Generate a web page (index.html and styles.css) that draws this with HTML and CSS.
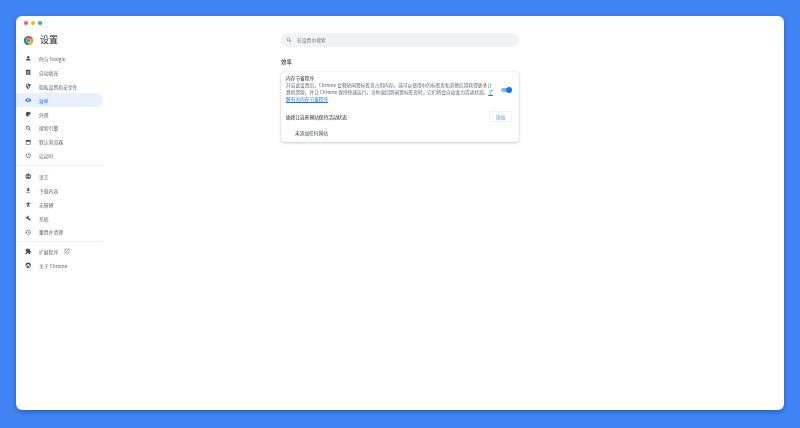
FILE: index.html
```html
<!DOCTYPE html>
<html lang="zh-CN">
<head>
<meta charset="utf-8">
<title>设置</title>
<link rel="stylesheet" href="styles.css">
</head>
<body>
<div class="window">
  <div class="titlebar">
    <span class="dot red"></span><span class="dot yellow"></span><span class="dot green"></span>
  </div>
  <div class="content">
    <aside class="sidebar">
      <div class="brand">
        <svg class="logo" viewBox="0 0 24 24"><circle cx="12" cy="12" r="12" fill="#db4437"/><path d="M12 12 1.6 18A12 12 0 0 1 1.6 6Z" fill="#0f9d58"/><path d="M12 12 12 24A12 12 0 0 1 1.6 18Z" fill="#0f9d58"/><path d="M12 12h10.9A12 12 0 0 1 12 24Z" fill="#f4b400"/><path d="M12 12 22.4 6A12 12 0 0 1 24 12Z" fill="#f4b400"/><circle cx="12" cy="12" r="6" fill="#fff"/><circle cx="12" cy="12" r="4.6" fill="#4285f4"/></svg>
        <span class="brand-name">设置</span>
      </div>
      <nav class="nav">
        <a class="item"><svg class="ico" viewBox="0 0 24 24"><circle cx="12" cy="8" r="4.5"/><path d="M3 20v-2c0-3 6-4.500 9-4.500s9 1.500 9 4.500v2Z"/></svg>你与 Google</a>
        <a class="item"><svg class="ico" viewBox="0 0 24 24"><path d="M4 3h16v18H4Zm4 4v2h8V7Zm0 4v2h8v-2Zm0 4v2h5v-2Z" fill-rule="evenodd"/></svg>自动填充</a>
        <a class="item"><svg class="ico" viewBox="0 0 24 24"><path d="M12 2 4 5v6c0 5 3.400 9.500 8 11 4.600-1.500 8-6 8-11V5Zm0 3v7H6.500V6.800ZM12 12h5.500c-.5 3.500-2.700 6.200-5.500 7.300Z" fill-rule="evenodd"/></svg>隐私设置和安全性</a>
        <a class="item active"><svg class="ico" viewBox="0 0 24 24"><path d="M12 5C7 5 3 8 1 12c2 4 6 7 11 7s9-3 11-7c-2-4-6-7-11-7Zm0 11.500a4.500 4.500 0 1 1 0-9 4.500 4.500 0 0 1 0 9Zm0-2.500a2 2 0 1 0 0-4 2 2 0 0 0 0 4Z" fill-rule="evenodd"/></svg>效率</a>
        <a class="item"><svg class="ico" viewBox="0 0 24 24"><path d="M12 3a9 9 0 0 0 0 18c1.500 0 2-1 2-2 0-1.500-1-1.800-1-3 0-1 1-2 2-2h2.500c2 0 3.500-1.500 3.500-3.500C21 6 17 3 12 3Z"/></svg>外观</a>
        <a class="item"><svg class="ico" viewBox="0 0 24 24"><path d="M10 3a7 7 0 1 0 4.300 12.500l5.200 5.200 1.700-1.700-5.200-5.200A7 7 0 0 0 10 3Zm0 2.200a4.800 4.800 0 1 1 0 9.600 4.800 4.800 0 0 1 0-9.600Z" fill-rule="evenodd"/></svg>搜索引擎</a>
        <a class="item"><svg class="ico" viewBox="0 0 24 24"><path d="M3 4h18v16H3Zm2 6v8h14v-8Z" fill-rule="evenodd"/></svg>默认浏览器</a>
        <a class="item"><svg class="ico" viewBox="0 0 24 24"><path d="M11 3h2v10h-2ZM7.500 5.800l1.400 1.500a6.500 6.500 0 1 0 6.200 0l1.400-1.500a8.500 8.500 0 1 1-9 0Z"/></svg>启动时</a>
        <div class="sep"></div>
        <a class="item"><svg class="ico" viewBox="0 0 24 24"><path d="M12 2a10 10 0 1 0 0 20 10 10 0 0 0 0-20ZM5 9h4v6H5Zm6 0h2v6h-2Zm4 0h4v6h-4ZM9.500 4.800 9 7H6ZM14.500 4.800 18 7h-3ZM6 17h3l.5 2.200ZM15 17h3l-3.500 2.200Z" fill-rule="evenodd"/></svg>语言</a>
        <a class="item"><svg class="ico" viewBox="0 0 24 24"><path d="M9 3h6v7h4l-7 7-7-7h4ZM5 19h14v2H5Z"/></svg>下载内容</a>
        <a class="item"><svg class="ico" viewBox="0 0 24 24"><path d="M12 2.500a2 2 0 1 1 0 4 2 2 0 0 1 0-4ZM3 7h18v2l-6 1v4l2 8h-2.500L12 15.500 9.500 22H7l2-8v-4L3 9Z"/></svg>无障碍</a>
        <a class="item"><svg class="ico" viewBox="0 0 24 24"><path d="M21 17.500 13.500 10c.7-2 .3-4.300-1.300-5.900C10.500 2.400 8 2.100 6 3l3.600 3.600-2.800 2.800L3.100 5.800C2.100 7.800 2.500 10.400 4.200 12.100c1.600 1.600 3.900 2 5.900 1.300L17.600 21c.4.400 1 .4 1.400 0l2-2c.4-.4.400-1.100 0-1.500Z"/></svg>系统</a>
        <a class="item"><svg class="ico" viewBox="0 0 24 24"><path d="M13 3a9 9 0 0 0-9 9H1l4 4 4-4H6a7 7 0 1 1 2 4.900l-1.400 1.400A9 9 0 1 0 13 3Zm-1 5v5l4.200 2.500.8-1.300-3.500-2V8Z"/></svg>重置并清理</a>
        <div class="sep sep-b"></div>
        <a class="item"><svg class="ico" viewBox="0 0 24 24"><path d="M20.500 11H19V7a2 2 0 0 0-2-2h-4V3.500a2.500 2.500 0 0 0-5 0V5H4a2 2 0 0 0-2 2v3.800h1.500a2.700 2.700 0 0 1 0 5.400H2V20a2 2 0 0 0 2 2h3.800v-1.500a2.700 2.700 0 0 1 5.400 0V22H17a2 2 0 0 0 2-2v-4h1.500a2.500 2.500 0 0 0 0-5Z"/></svg>扩展程序<svg class="ext" viewBox="0 0 24 24"><path d="M19 19H5V5h7V3H3v18h18v-9h-2ZM14 3v2h3.600l-9.800 9.800 1.400 1.400L19 6.400V10h2V3Z"/></svg></a>
        <a class="item"><svg class="ico" viewBox="0 0 24 24"><path d="M12 2a10 10 0 1 0 0 20 10 10 0 0 0 0-20Zm0 6.500a3.500 3.500 0 1 1 0 7 3.500 3.500 0 0 1 0-7ZM5 7h14l-3 1.500H9.500ZM4.200 10 8 15l-2 4.500A8.500 8.500 0 0 1 4.200 10ZM20 10a8.500 8.500 0 0 1-7 10l3-5Z" fill-rule="evenodd"/></svg>关于 Chrome</a>
      </nav>
    </aside>
    <main class="main">
      <div class="search">
        <svg class="search-ico" viewBox="0 0 24 24"><path d="M10 3a7 7 0 1 0 4.300 12.500l5.200 5.200 1.700-1.700-5.200-5.200A7 7 0 0 0 10 3Zm0 2.200a4.800 4.800 0 1 1 0 9.600 4.800 4.800 0 0 1 0-9.600Z" fill-rule="evenodd"/></svg>
        <span class="search-text">在设置中搜索</span>
      </div>
      <h2 class="section-title">效率</h2>
      <section class="card">
        <div class="saver">
          <div class="saver-text">
            <div class="saver-title">内存节省程序</div>
            <p class="saver-desc">开启此设置后，Chrome 会释放闲置标签页占用内存。这可以使用中的标签页和其他应用获得更多计算机资源，并让 Chrome 保持快速运行。当你返回到闲置标签页时，它们将会自动变为活动状态。<a class="link">了解有关内存节省程序</a></p>
          </div>
          <span class="toggle"><span class="knob"></span></span>
        </div>
        <div class="sites">
          <span>始终让这些网站保持活动状态</span>
          <button class="add">添加</button>
        </div>
        <div class="empty">未添加任何网站</div>
      </section>
    </main>
  </div>
</div>
</body>
</html>
```
FILE: styles.css
```css
* { box-sizing: border-box; }
html, body { margin: 0; height: 100%; }
body {
  background: #3f83f5;
  padding: 16px 16px 18px;
  font-family: "Noto Sans CJK SC", "Liberation Sans", sans-serif;
  color: #3c4043;
  overflow: hidden;
}
.window {
  height: 394px;
  background: #fff;
  border-radius: 6px;
  box-shadow: 0 2px 4px rgba(20, 50, 110, .45);
  display: flex;
  flex-direction: column;
}
.titlebar { height: 14px; padding: 5px 0 0 7.500px; display: flex; gap: 3px; flex: none; }
.dot { width: 4px; height: 4px; border-radius: 50%; }
.red { background: #f05a50; }
.yellow { background: #f5b32d; }
.green { background: #2fc24f; }
.content { flex: 1; display: flex; min-height: 0; filter: blur(.3px); }
.sidebar { width: 87px; flex: none; }
.brand { height: 20px; padding-left: 7.500px; display: flex; align-items: center; gap: 7.500px; }
.logo { width: 9px; height: 9px; }
.brand-name { font-size: 9px; line-height: 20px; color: #202124; }
.nav { margin-top: 1.500px; }
.item {
  height: 13.900px;
  display: flex;
  align-items: center;
  padding-left: 9.250px;
  font-size: 4.800px;
  color: #5f6368;
  border-radius: 0 7px 7px 0;
}
.item.active { background: #e8f0fe; color: #1a73e8; }
.ico { width: 6.500px; height: 6.500px; margin-right: 7.250px; fill: #4a4d51; flex: none; }
.active .ico { fill: #1a73e8; }
.ext { width: 6px; height: 6px; margin-left: 6px; fill: #5f6368; }
.sep { height: 1px; background: #eeeff1; margin: 2.400px 0 3.400px; }
.sep-b { margin: 2px 0 2.500px; }
.main { flex: 1; padding: 3px 0 0 178px; }
.search {
  width: 238px;
  height: 14px;
  border-radius: 7px;
  background: #f1f3f4;
  display: flex;
  align-items: center;
  padding-left: 5px;
  gap: 5px;
  font-size: 4.800px;
  color: #70757a;
}
.search-text { margin-top: -2px; }
.search-ico { width: 6px; height: 6px; fill: #70757a; }
.section-title { margin: 11px 0 0; font-size: 5.500px; line-height: 8px; font-weight: 400; color: #202124; }
.card {
  width: 238px;
  height: 70px;
  margin-top: 6px;
  background: #fff;
  border-radius: 3px;
  box-shadow: 0 0 1px rgba(60, 64, 67, .3), 0 1px 3px rgba(60, 64, 67, .25);
  padding: 3px 7px 0 5px;
  font-size: 4.700px;
}
.saver { display: flex; align-items: center; gap: 8px; }
.saver-text { width: 207px; }
.saver-title { line-height: 7px; color: #202124; }
.saver-desc { margin: 0; line-height: 7px; color: #5f6368; }
.link { color: #1a73e8; text-decoration: underline; }
.toggle { position: relative; width: 11px; height: 4px; margin-top: 2px; border-radius: 2px; background: #8ab4f8; flex: none; }
.knob { position: absolute; right: 0; top: -1px; width: 6px; height: 6px; border-radius: 50%; background: #1a73e8; }
.sites { margin-top: 8px; height: 11px; display: flex; justify-content: space-between; align-items: center; color: #202124; }
.add {
  width: 23px;
  height: 11px;
  padding: 0;
  background: #fff;
  border: 1px solid #f1f3f4;
  border-radius: 2px;
  font: inherit;
  color: #4a8fec;
}
.empty { margin-top: 8px; padding-left: 9px; line-height: 7px; color: #3c4043; }
```
